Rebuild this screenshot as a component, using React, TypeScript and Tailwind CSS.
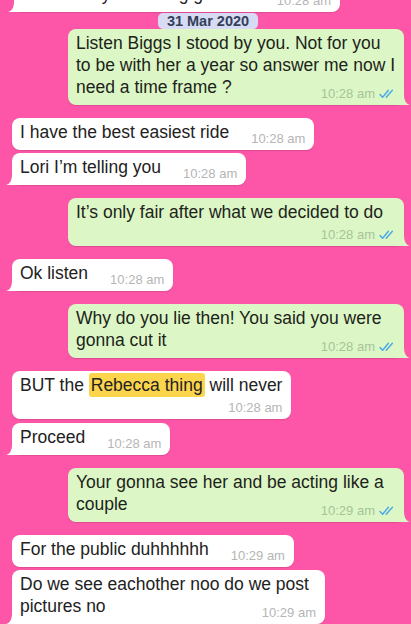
import React from 'react';

type Msg = {
  me?: boolean;
  lines: React.ReactNode[];
  time: string;
  tail?: boolean;
  below?: boolean;
  w?: string;
  mt: string;
};

const messages: Msg[] = [
  {
    me: true,
    lines: ['Listen Biggs I stood by you. Not for you', 'to be with her a year so answer me now I', 'need a time frame ?'],
    time: '10:28 am',
    tail: true,
    mt: 'mt-0',
  },
  { lines: ['I have the best easiest ride'], time: '10:28 am', mt: 'mt-[13px]' },
  { lines: ['Lori I’m telling you'], time: '10:28 am', tail: true, mt: 'mt-[3px]' },
  { me: true, lines: ['It’s only fair after what we decided to do'], time: '10:28 am', tail: true, below: true, mt: 'mt-[13px]' },
  { lines: ['Ok listen'], time: '10:28 am', tail: true, mt: 'mt-[13px]' },
  {
    me: true,
    lines: ['Why do you lie then! You said you were', 'gonna cut it'],
    time: '10:28 am',
    tail: true,
    mt: 'mt-[13px]',
  },
  {
    lines: [
      <>
        BUT the <span className="bg-[#fdd54c] px-[2px] py-[2px] rounded-[3px]">Rebecca thing</span> will never
      </>,
    ],
    time: '10:28 am',
    below: true,
    mt: 'mt-[13px]',
  },
  { lines: ['Proceed'], time: '10:28 am', tail: true, mt: 'mt-[4px]' },
  {
    me: true,
    lines: ['Your gonna see her and be acting like a', 'couple'],
    time: '10:29 am',
    tail: true,
    mt: 'mt-[13px]',
  },
  { lines: ['For the public duhhhhhh'], time: '10:29 am', mt: 'mt-[13px]' },
  {
    lines: ['Do we see eachother noo do we post', 'pictures no'],
    time: '10:29 am',
    tail: true,
    w: 'w-[313px]',
    mt: 'mt-[3px]',
  },
];

function Ticks() {
  return (
    <svg width="16" height="10" viewBox="0 0 16 10" className="inline-block ml-[4px] -mt-[2px]" fill="none">
      <path d="M1 5.5 L3.6 8.2 L9.4 1.2" stroke="#4aa8e6" strokeWidth="1.4" strokeLinecap="round" strokeLinejoin="round" />
      <path d="M7.2 8.2 L13.4 1.2" stroke="#4aa8e6" strokeWidth="1.4" strokeLinecap="round" />
    </svg>
  );
}

function Stamp({ time, me }: { time: string; me?: boolean }) {
  return (
    <span className={`whitespace-nowrap text-[13px] leading-[15px] ${me ? 'text-[#a5c49a]' : 'text-[#b5b5b5]'}`}>
      {time}
      {me && <Ticks />}
    </span>
  );
}

function Tail({ me }: { me?: boolean }) {
  return (
    <svg
      width="14"
      height="14"
      viewBox="0 0 14 14"
      className={`absolute bottom-0 ${me ? 'right-[-6px] -scale-x-100' : 'left-[-6px]'}`}
    >
      <path d="M6 0 H14 V14 H0 C4 13 6 9.5 6 3 Z" fill={me ? '#dcf7c5' : '#ffffff'} />
    </svg>
  );
}

function Bubble({ m, extra = '' }: { m: Msg; extra?: string }) {
  const look = m.me ? 'self-end w-[336px] bg-[#dcf7c5] text-[#1d231b]' : 'self-start bg-white text-[#222222]';
  return (
    <div
      className={`relative rounded-[8px] pl-2 pr-[9px] pt-[3px] pb-1 shadow-[0_1px_1px_rgba(0,0,0,0.12)] ${look} ${m.w ?? ''} ${m.mt} ${extra}`}
    >
      <div className="flow-root text-[17.5px] leading-[22px]">
        {m.lines.map((l, i) => (
          <React.Fragment key={i}>
            {i > 0 && <br />}
            <span className="whitespace-nowrap">{l}</span>
          </React.Fragment>
        ))}
        {!m.below && (
          <span className="float-right ml-[22px] mt-[10px] text-[13px] leading-[15px]">
            <Stamp time={m.time} me={m.me} />
          </span>
        )}
      </div>
      {m.below && (
        <div className="flex justify-end mt-[4px] text-[13px] leading-[15px]">
          <Stamp time={m.time} me={m.me} />
        </div>
      )}
      {m.tail && <Tail me={m.me} />}
    </div>
  );
}

export default function App() {
  return (
    <div className="h-[624px] w-[411px] overflow-hidden bg-[#fd55a7] font-['Liberation_Sans',Arial,sans-serif]">
      <div className="flex flex-col pl-3 pr-[7px]">
        <Bubble
          m={{ lines: ['Cause they are doing great'], time: '10:28 am', tail: true, w: 'w-[326px]', mt: '-mt-[20px]' }}
          extra="ml-[2px]"
        />
        <div className="self-center mt-[1px] rounded-[5px] bg-[#d7dcf4] px-[9px] text-[14.5px] font-bold leading-[16px] text-[#33405a]">
          31 Mar 2020
        </div>
        {messages.map((m, i) => (
          <Bubble key={i} m={m} />
        ))}
      </div>
    </div>
  );
}
